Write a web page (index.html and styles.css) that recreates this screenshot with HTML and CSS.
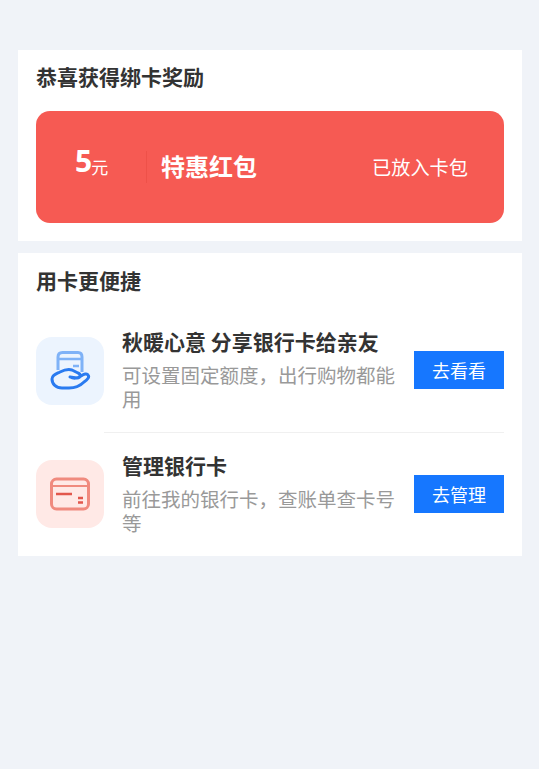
FILE: index.html
```html
<!DOCTYPE html>
<html lang="zh-CN">
<head>
  <meta charset="UTF-8">
  <meta name="viewport" content="width=device-width, initial-scale=1.0">
  <title>绑卡奖励</title>
  <link rel="stylesheet" href="styles.css">
</head>
<body>
  <section class="card reward-card">
    <h2>恭喜获得绑卡奖励</h2>
    <div class="coupon">
      <div class="amount"><strong>5</strong><span>元</span></div>
      <div class="coupon-name">特惠红包</div>
      <div class="coupon-state">已放入卡包</div>
    </div>
  </section>

  <section class="card use-card">
    <h2>用卡更便捷</h2>
    <div class="row">
      <div class="icon icon-blue">
        <svg width="68" height="68" viewBox="0 0 68 68" fill="none">
          <path d="M22 33V20C22 17 24 15.500 26.500 15.500H42C44.500 15.500 46 17 46 20V35" stroke="#7fb2f7" stroke-width="3"/>
          <path d="M22 22H46" stroke="#7fb2f7" stroke-width="2.500"/>
          <path d="M37 29H43" stroke="#7fb2f7" stroke-width="2.500"/>
          <path d="M16 42C16 38 20 37 24 35C28 33 32 32 36 33L42 36C45 37 45 41 41 41L34 40C38 42 42 41 45 39C48 37 51 36 52 38C54 40 51 43 48 45C44 49 38 51 33 51H26C20 51 16 47 16 42Z" stroke="#2a7bf0" stroke-width="3" stroke-linejoin="round"/>
        </svg>
      </div>
      <div class="row-main">
        <div class="row-text">
          <h3>秋暖心意 分享银行卡给亲友</h3>
          <p>可设置固定额度，出行购物都能用</p>
        </div>
        <button>去看看</button>
      </div>
    </div>
    <div class="row">
      <div class="icon icon-red">
        <svg width="68" height="68" viewBox="0 0 68 68" fill="none">
          <rect x="15.500" y="19" width="37" height="30" rx="5" stroke="#f08a7e" stroke-width="3"/>
          <path d="M15.500 26H52.500" stroke="#f08a7e" stroke-width="2"/>
          <path d="M20 34H36" stroke="#e2574c" stroke-width="2.500"/>
          <path d="M42 38H47M42 42.500H47" stroke="#e2574c" stroke-width="2.500"/>
        </svg>
      </div>
      <div class="row-main">
        <div class="row-text">
          <h3>管理银行卡</h3>
          <p>前往我的银行卡，查账单查卡号等</p>
        </div>
        <button>去管理</button>
      </div>
    </div>
  </section>
</body>
</html>
```
FILE: styles.css
```css
* {
  box-sizing: border-box;
}
body {
  margin: 0;
  padding: 50px 17px 0 18px;
  min-height: 100vh;
  background-color: #f0f3f8;
  font-family: "Noto Sans CJK SC", "Noto Sans", sans-serif;
  color: #333333;
}
.card {
  background-color: #ffffff;
  padding: 0 18px;
}
h2 {
  margin: 0;
  font-size: 21px;
  font-weight: 600;
  line-height: 28px;
}
.reward-card {
  height: 191px;
  padding-top: 12px;
  margin-bottom: 12px;
}
.coupon {
  display: flex;
  align-items: center;
  height: 112px;
  margin-top: 21px;
  padding: 0 36px 0 39px;
  background-color: #f65a53;
  border-radius: 14px;
  color: #ffffff;
}
.amount {
  width: 72px;
  height: 32px;
  display: flex;
  align-items: flex-start;
  line-height: 20px;
  border-right: 1px solid #ee5149;
}
.amount strong {
  font-size: 30px;
  font-family: "Noto Sans", sans-serif;
}
.amount span {
  margin: 6px 0 0 -1px;
  font-size: 17px;
}
.coupon-name {
  flex: 1;
  padding: 0 0 4px 14px;
  font-size: 24px;
  font-weight: 700;
}
.coupon-state {
  font-size: 19.200px;
}
.use-card {
  height: 303px;
  padding-top: 13px;
}
.use-card h2 {
  margin-bottom: 15px;
}
.row {
  display: flex;
  align-items: center;
}
.icon {
  flex: none;
  width: 68px;
  height: 68px;
  border-radius: 16px;
  display: flex;
  align-items: center;
  justify-content: center;
}
.icon-blue {
  background-color: #ecf4fe;
}
.icon-red {
  background-color: #ffe9e6;
}
.row-main {
  flex: 1;
  display: flex;
  align-items: center;
  height: 123px;
}
.row + .row .row-main {
  border-top: 1px solid #f0f0f0;
}
.row-text {
  flex: 1;
  min-width: 0;
  padding: 0 18px 4px;
}
h3 {
  margin: 0;
  font-size: 21px;
  font-weight: 600;
  line-height: 30px;
  white-space: nowrap;
}
.row-text p {
  margin: 7px 0 0;
  font-size: 19.500px;
  line-height: 24px;
  color: #999999;
}
button {
  flex: none;
  width: 90px;
  height: 38px;
  margin-bottom: 1px;
  border: none;
  padding: 0;
  background-color: #1677ff;
  color: #ffffff;
  font-family: inherit;
  font-size: 18px;
}
```
